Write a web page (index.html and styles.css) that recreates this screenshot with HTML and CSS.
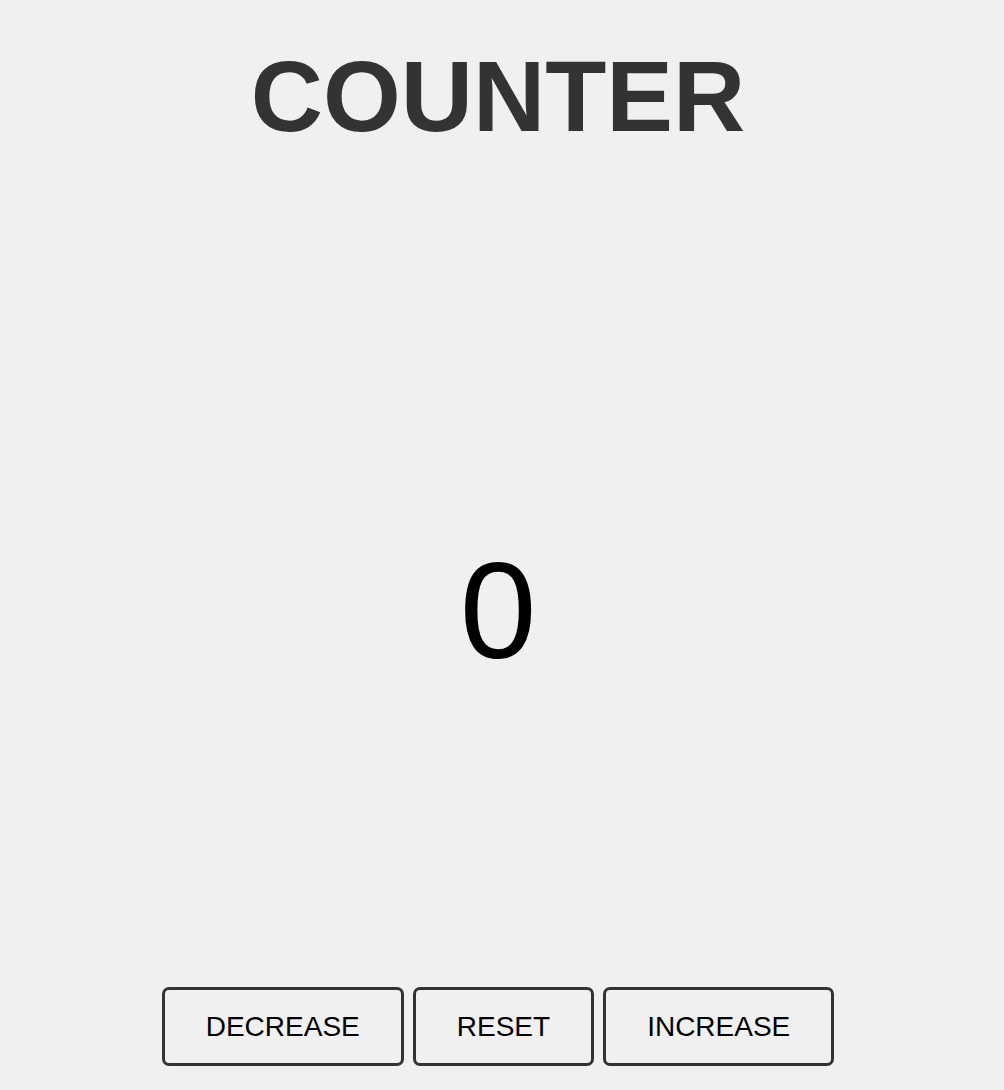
FILE: index.html
```html
<!DOCTYPE html>
<html lang="en">
<head>
<meta charset="utf-8">
<title>Counter</title>
<link rel="stylesheet" href="styles.css">
</head>
<body>
<main class="app">
  <h1 class="title">COUNTER</h1>
  <div class="value">0</div>
  <div class="controls">
    <button class="btn" type="button">DECREASE</button>
    <button class="btn" type="button">RESET</button>
    <button class="btn" type="button">INCREASE</button>
  </div>
</main>
</body>
</html>
```
FILE: styles.css
```css
html, body {
  margin: 0;
  padding: 0;
  background: #f0f0f0;
}
body {
  font-family: "Liberation Sans", Arial, Helvetica, sans-serif;
}
.app {
  display: flex;
  flex-direction: column;
  align-items: center;
  padding: 39px 8px 0 0;
}
.title {
  margin: 0;
  font-size: 100px;
  line-height: 115px;
  font-weight: 700;
  color: #333333;
}
.value {
  margin-top: 370px;
  font-size: 138px;
  line-height: 172px;
  color: #000000;
}
.controls {
  margin-top: 291px;
  display: flex;
  gap: 9px;
}
.btn {
  font-family: "Liberation Sans", Arial, Helvetica, sans-serif;
  font-size: 28px;
  line-height: 33px;
  color: #000000;
  background: transparent;
  border: 3px solid #333333;
  border-radius: 7px;
  padding: 20px 41px;
  margin: 0;
}
```
